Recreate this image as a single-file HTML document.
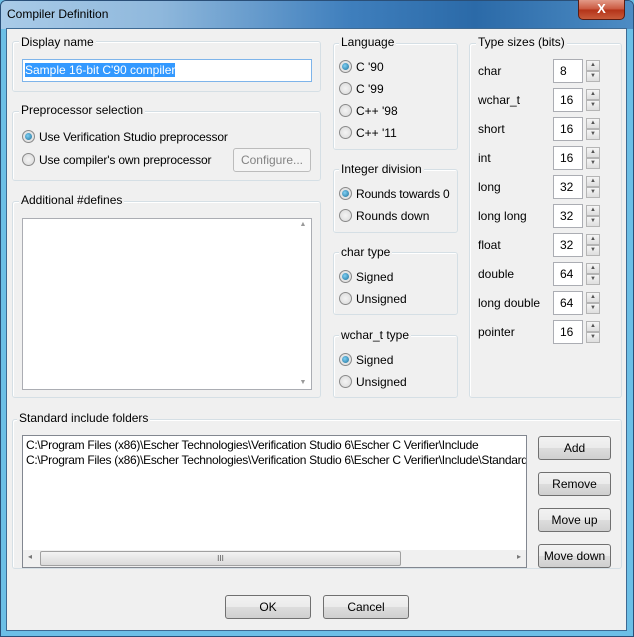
<!DOCTYPE html>
<html><head><style>
*{box-sizing:border-box}
body{margin:0;width:634px;height:637px;overflow:hidden;font-family:"Liberation Sans",sans-serif;font-size:12px;color:#000;background:#6cbfe6}
.a{position:absolute}
#win{position:absolute;left:0;top:0;width:634px;height:637px;background:#6cbfe6;border:1px solid #2a4f78;border-radius:6px 6px 0 0}
#tb{position:absolute;left:1px;top:1px;width:632px;height:28px;background:linear-gradient(90deg,#a9cbe8 0,#8fb8dc 25%,#3f7fbd 55%,#2b6aa8 75%,#4d8cc4 100%);border-radius:5px 5px 0 0}
#title{left:7px;top:7px;font-size:12px;color:#000}
#close{left:578px;top:0;width:47px;height:20px;border:1px solid #5a1d14;border-top:none;border-radius:0 0 5px 5px;background:linear-gradient(180deg,#e29a88,#c9553c 50%,#b33218 51%,#c85a3a);color:#fff;font-weight:bold;text-align:center;font-size:13px;line-height:18px}
#client{left:6px;top:28px;width:621px;height:603px;background:#f0f0f0;border:1px solid #3e6a93}
.g{position:absolute;border:1px solid #d5dfe5;border-radius:3px;box-shadow:inset 1px 1px 0 #fff}
.gl{position:absolute;background:#f0f0f0;padding:0 2px;white-space:nowrap}
.r{position:absolute;white-space:nowrap}
.r i{display:inline-block;width:13px;height:13px;border-radius:50%;border:1px solid #8a8a8a;background:radial-gradient(circle,#f4f4f4,#d8d8d8);vertical-align:-2px;margin-right:4px;position:relative}
.r i.on:after{content:"";position:absolute;left:2px;top:2px;width:7px;height:7px;border-radius:50%;background:radial-gradient(circle at 40% 40%,#7fd0f5,#1c6e96)}
.box{position:absolute;width:30px;height:24px;background:#fff;border:1px solid #abadb3;padding:4px 0 0 6px}
.sp{position:absolute;width:14px;height:22px}
.sp b{display:block;height:11px;border:1px solid #b5b5b5;background:linear-gradient(#f5f5f5,#dedede);font-size:6px;line-height:9px;text-align:center;color:#555;font-weight:normal}
.btn{position:absolute;height:24px;border:1px solid #707070;border-radius:3px;background:linear-gradient(180deg,#f2f2f2 0,#ebebeb 50%,#dddddd 51%,#cfcfcf 100%);text-align:center;line-height:22px}
</style></head><body>
<div id="win"></div>
<div id="tb"></div>
<div class="a" id="title">Compiler Definition</div>
<div class="a" id="close">X</div>
<div class="a" id="client"></div>

<div class="g" style="left:12px;top:41px;width:309px;height:51px"></div>
<div class="gl" style="left:19px;top:35px">Display name</div>
<div class="a" style="left:22px;top:59px;width:290px;height:23px;background:#fff;border:1px solid #7eb4ea;padding:3px 0 0 2px"><span style="background:#3399ff;color:#fff">Sample 16-bit C'90 compiler</span></div>

<div class="g" style="left:12px;top:111px;width:309px;height:70px"></div>
<div class="gl" style="left:19px;top:103px">Preprocessor selection</div>
<div class="r" style="left:22px;top:130px;letter-spacing:-0.15px"><i class="on"></i>Use Verification Studio preprocessor</div>
<div class="r" style="left:22px;top:153px;letter-spacing:-0.15px"><i></i>Use compiler's own preprocessor</div>
<div class="btn" style="left:233px;top:148px;width:78px;border-color:#bcbcbc;background:#f4f4f4;color:#838383">Configure...</div>

<div class="g" style="left:12px;top:201px;width:309px;height:197px"></div>
<div class="gl" style="left:19px;top:193px">Additional #defines</div>
<div class="a" style="left:22px;top:218px;width:290px;height:172px;background:#fff;border:1px solid #abadb3"></div>
<div class="a" style="left:295px;top:219px;width:16px;height:170px;background:#fff;color:#999;font-size:7px;text-align:center;line-height:12px">▲<div style="position:absolute;bottom:0;width:16px">▼</div></div>

<div class="g" style="left:333px;top:43px;width:125px;height:107px"></div>
<div class="gl" style="left:339px;top:35px">Language</div>
<div class="r" style="left:339px;top:60px"><i class="on"></i>C '90</div>
<div class="r" style="left:339px;top:82px"><i></i>C '99</div>
<div class="r" style="left:339px;top:104px"><i></i>C++ '98</div>
<div class="r" style="left:339px;top:126px"><i></i>C++ '11</div>

<div class="g" style="left:333px;top:169px;width:125px;height:64px"></div>
<div class="gl" style="left:339px;top:162px">Integer division</div>
<div class="r" style="left:339px;top:187px;letter-spacing:-0.2px"><i class="on"></i>Rounds towards 0</div>
<div class="r" style="left:339px;top:209px"><i></i>Rounds down</div>

<div class="g" style="left:333px;top:252px;width:125px;height:63px"></div>
<div class="gl" style="left:339px;top:245px">char type</div>
<div class="r" style="left:339px;top:270px"><i class="on"></i>Signed</div>
<div class="r" style="left:339px;top:292px"><i></i>Unsigned</div>

<div class="g" style="left:333px;top:335px;width:125px;height:63px"></div>
<div class="gl" style="left:339px;top:328px">wchar_t type</div>
<div class="r" style="left:339px;top:353px"><i class="on"></i>Signed</div>
<div class="r" style="left:339px;top:375px"><i></i>Unsigned</div>

<div class="g" style="left:469px;top:43px;width:153px;height:355px"></div>
<div class="gl" style="left:476px;top:35px">Type sizes (bits)</div>
<div class="r" style="left:478px;top:64px">char</div><div class="box" style="left:553px;top:59px">8</div><div class="sp" style="left:586px;top:60px"><b>▲</b><b>▼</b></div>
<div class="r" style="left:478px;top:93px">wchar_t</div><div class="box" style="left:553px;top:88px">16</div><div class="sp" style="left:586px;top:89px"><b>▲</b><b>▼</b></div>
<div class="r" style="left:478px;top:122px">short</div><div class="box" style="left:553px;top:117px">16</div><div class="sp" style="left:586px;top:118px"><b>▲</b><b>▼</b></div>
<div class="r" style="left:478px;top:151px">int</div><div class="box" style="left:553px;top:146px">16</div><div class="sp" style="left:586px;top:147px"><b>▲</b><b>▼</b></div>
<div class="r" style="left:478px;top:180px">long</div><div class="box" style="left:553px;top:175px">32</div><div class="sp" style="left:586px;top:176px"><b>▲</b><b>▼</b></div>
<div class="r" style="left:478px;top:209px">long long</div><div class="box" style="left:553px;top:204px">32</div><div class="sp" style="left:586px;top:205px"><b>▲</b><b>▼</b></div>
<div class="r" style="left:478px;top:238px">float</div><div class="box" style="left:553px;top:233px">32</div><div class="sp" style="left:586px;top:234px"><b>▲</b><b>▼</b></div>
<div class="r" style="left:478px;top:267px">double</div><div class="box" style="left:553px;top:262px">64</div><div class="sp" style="left:586px;top:263px"><b>▲</b><b>▼</b></div>
<div class="r" style="left:478px;top:296px">long double</div><div class="box" style="left:553px;top:291px">64</div><div class="sp" style="left:586px;top:292px"><b>▲</b><b>▼</b></div>
<div class="r" style="left:478px;top:325px">pointer</div><div class="box" style="left:553px;top:320px">16</div><div class="sp" style="left:586px;top:321px"><b>▲</b><b>▼</b></div>

<div class="g" style="left:12px;top:419px;width:610px;height:150px"></div>
<div class="gl" style="left:17px;top:411px">Standard include folders</div>
<div class="a" style="left:22px;top:435px;width:505px;height:133px;background:#fff;border:1px solid #828790;overflow:hidden">
<div style="position:absolute;left:3px;top:2px;white-space:nowrap;line-height:15px;letter-spacing:-0.3px">C:\Program Files (x86)\Escher Technologies\Verification Studio 6\Escher C Verifier\Include<br>C:\Program Files (x86)\Escher Technologies\Verification Studio 6\Escher C Verifier\Include\Standard</div>
<div style="position:absolute;left:0;bottom:0;width:503px;height:17px;background:#f0f0f0">
<div style="position:absolute;left:17px;top:1px;width:361px;height:15px;border:1px solid #a0a0a0;border-radius:2px;background:linear-gradient(#f3f3f3,#dadada);text-align:center;font-size:8px;line-height:13px;color:#555">III</div>
<div style="position:absolute;left:5px;top:2px;font-size:8px;color:#777">◂</div>
<div style="position:absolute;right:5px;top:2px;font-size:8px;color:#777">▸</div>
</div></div>
<div class="btn" style="left:538px;top:436px;width:73px">Add</div>
<div class="btn" style="left:538px;top:472px;width:73px">Remove</div>
<div class="btn" style="left:538px;top:508px;width:73px">Move up</div>
<div class="btn" style="left:538px;top:544px;width:73px">Move down</div>

<div class="btn" style="left:225px;top:595px;width:86px">OK</div>
<div class="btn" style="left:323px;top:595px;width:86px">Cancel</div>
</body></html>
